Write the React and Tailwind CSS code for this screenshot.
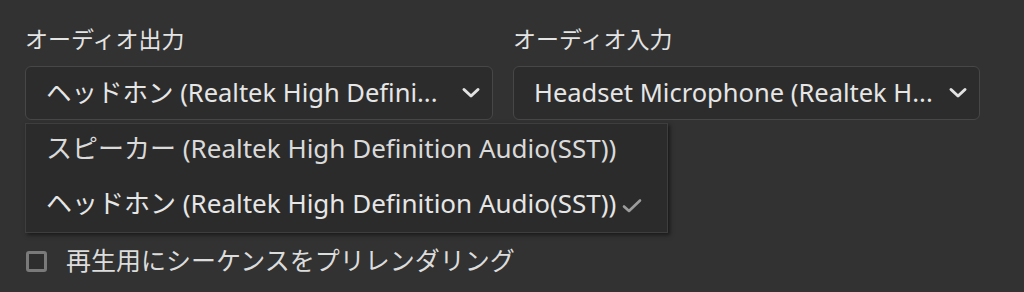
import React from "react";

const font = { fontFamily: '"Noto Sans", "Noto Sans CJK JP", sans-serif' };

function Chevron() {
  return (
    <svg width="20" height="12" viewBox="0 0 20 12" className="shrink-0">
      <polyline points="3,2.5 10,9 17,2.5" fill="none" stroke="#e2e2e2" strokeWidth="3" strokeLinecap="round" strokeLinejoin="round" />
    </svg>
  );
}

function Field({ label, value, width }) {
  return (
    <div className={`flex flex-col ${width}`}>
      <div className="text-[23px] leading-[30px] text-[#e4e4e4] mb-[12px]">{label}</div>
      <div className="h-[54px] rounded-[6px] border border-[#474747] bg-[#2c2c2c] flex items-center pl-[20px] pr-[11px]">
        <span className="flex-1 whitespace-nowrap overflow-hidden text-[25.5px] leading-[34px] pb-[3px] text-[#e6e6e6]">{value}</span>
        <Chevron />
      </div>
    </div>
  );
}

export default function App() {
  return (
    <div className="w-[1024px] h-[292px] bg-[#323232] relative overflow-hidden pl-[25px] pt-[24px]" style={font}>
      <div className="flex gap-[20px]">
        <Field label="オーディオ出力" value="ヘッドホン (Realtek High Defini..." width="w-[468px]" />
        <Field label="オーディオ入力" value="Headset Microphone (Realtek H..." width="w-[467px]" />
      </div>
      <div className="flex items-center mt-[126px] h-[30px]">
        <div className="w-[21px] h-[21px] ml-[1px] rounded-[3px] border-[3px] border-[#7a7a7a] bg-[#2e2e2e]" />
        <span className="ml-[19px] text-[25px] text-[#dcdcdc]">再生用にシーケンスをプリレンダリング</span>
      </div>
      <div className="absolute left-[25px] top-[123px] w-[643px] h-[110px] bg-[#2b2b2b] border border-[#3e3e3e] shadow-[2px_2px_4px_rgba(0,0,0,0.5)] flex flex-col justify-center pb-[4px]">
        <div className="h-[55px] shrink-0 flex items-center pl-[20px] text-[26px] text-[#dadada] whitespace-nowrap">
          スピーカー (Realtek High Definition Audio(SST))
        </div>
        <div className="h-[55px] shrink-0 flex items-center pl-[20px] text-[26px] text-[#e6e6e6] whitespace-nowrap">
          ヘッドホン (Realtek High Definition Audio(SST))
          <svg width="20" height="16" viewBox="0 0 20 16" className="ml-[6px] mt-[4px] shrink-0">
            <polyline points="2,8.5 7,13 18,2.5" fill="none" stroke="#9c9c9c" strokeWidth="2.6" strokeLinecap="round" strokeLinejoin="round" />
          </svg>
        </div>
      </div>
    </div>
  );
}
